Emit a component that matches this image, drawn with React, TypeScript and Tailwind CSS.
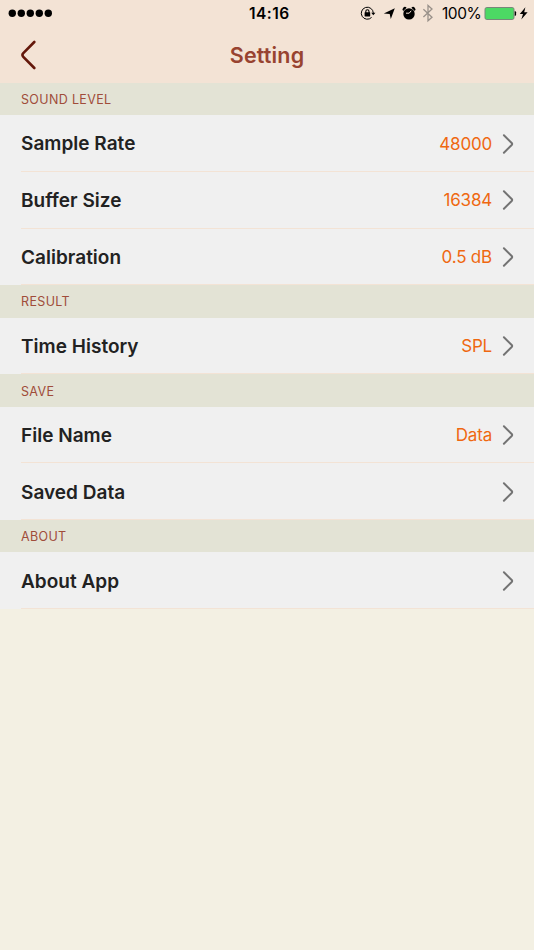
import { Fragment } from 'react';

type Row = { label: string; value?: string };

const sections: { title: string; rows: Row[] }[] = [
  {
    title: 'SOUND LEVEL',
    rows: [
      { label: 'Sample Rate', value: '48000' },
      { label: 'Buffer Size', value: '16384' },
      { label: 'Calibration', value: '0.5 dB' },
    ],
  },
  { title: 'RESULT', rows: [{ label: 'Time History', value: 'SPL' }] },
  { title: 'SAVE', rows: [{ label: 'File Name', value: 'Data' }, { label: 'Saved Data' }] },
  { title: 'ABOUT', rows: [{ label: 'About App' }] },
];

function StatusBar() {
  return (
    <div className="flex h-[27px] items-center text-black">
      <svg className="ml-2 shrink-0" width="45" height="27" viewBox="0 0 45 27">
        {[4.3, 13.3, 22.3, 31.3, 40.3].map(x => (
          <circle key={x} cx={x} cy="13.3" r="3.7" />
        ))}
      </svg>
      <span className="ml-[196px] w-[42px] pt-px text-[15.5px] font-semibold tracking-[0.45px]">14:16</span>
      <svg className="ml-[69px] shrink-0" width="76" height="27" viewBox="360 0 76 27">
        <path d="M371.6 17.4A6 6 0 1 1 373.3 13" fill="none" stroke="#000" />
        <path d="M371.2 12.7h4.2l-2.1 2.6z" />
        <rect x="364.6" y="12.3" width="5.6" height="4.2" rx=".4" />
        <path d="M365.8 13v-1.6a1.6 1.6 0 0 1 3.2 0V13" fill="none" stroke="#000" strokeWidth="1.1" />
        <path d="M394.8 8.2 383.8 13.5l5.9.6 1.1 5z" />
        <circle cx="409" cy="13.9" r="5.7" />
        <path d="M403.2 11a2.3 2.3 0 0 1 3.4-3.3zM414.8 11a2.3 2.3 0 0 0-3.4-3.3z" />
        <path d="M406 13.2h3.2l2-2.4" fill="none" stroke="#f3e3d5" strokeWidth="1" />
        <path d="m423.4 9.3 8.6 8-4 3.5V5.5l4 3.6-8.6 8" fill="none" stroke="#99918a" strokeWidth="1.3" />
      </svg>
      <span className="ml-[6px] w-[40px] pt-px text-[15.5px] tracking-[-0.45px]">100%</span>
      <svg className="ml-[2px] shrink-0" width="50" height="27" viewBox="484 0 50 27">
        <rect x="485" y="7.5" width="29" height="12" rx="1.8" fill="#4cd964" stroke="#79877a" />
        <path d="M514.7 11.2h.4a1 1 0 0 1 1 1v2.6a1 1 0 0 1-1 1h-.4z" />
        <path d="M525.4 7.3 519.8 14h3.2l-1.7 5.6 6.3-7.3h-3.4z" />
      </svg>
    </div>
  );
}

function ChevronRight() {
  return (
    <svg className="mr-5 ml-[10px] shrink-0" width="12" height="22" viewBox="0 0 12 22">
      <path d="m1.9 2.3 7.8 7.7q.9 1 0 2l-7.8 7.7" fill="none" stroke="#737373" strokeWidth="2" strokeLinecap="round" />
    </svg>
  );
}

export default function App() {
  return (
    <div className="h-[950px] w-[534px] overflow-hidden bg-[#f3f0e3] font-['Inter','Liberation_Sans',sans-serif]">
      <header className="h-[82.8px] bg-[#f3e3d5]">
        <StatusBar />
        <div className="grid h-[55px] grid-cols-[60px_1fr_60px] items-center">
          <svg className="ml-5" width="18" height="30" viewBox="0 0 18 30">
            <path d="m14.3 2-11 11.2q-1.7 1.8 0 3.6l11 11.2" fill="none" stroke="#64180b" strokeWidth="2.6" strokeLinecap="round" />
          </svg>
          <h1 className="pt-px text-center text-[21.5px] font-semibold tracking-[0.15px] text-[#984330]">Setting</h1>
        </div>
      </header>
      {sections.map(section => (
        <Fragment key={section.title}>
          <h2 className="flex h-[32.4px] items-center bg-[#e3e3d5] pt-[2.8px] pl-[21px] text-[12.5px] tracking-[0.35px] text-[#a04c3a]">
            {section.title}
          </h2>
          {section.rows.map(row => (
            <div key={row.label} className="h-[56.7px] bg-[#f0f0f0] pl-[21px]">
              <div className="flex h-full items-center justify-between border-b border-[#f3e3d5] pt-[1px]">
                <span className="pt-[2px] text-[19px] font-semibold tracking-[0.02px] text-[#222222]">{row.label}</span>
                <div className="flex items-center">
                  {row.value && <span className="pt-[2px] text-[17px] tracking-[-0.2px] text-[#ef6810]">{row.value}</span>}
                  <ChevronRight />
                </div>
              </div>
            </div>
          ))}
        </Fragment>
      ))}
    </div>
  );
}
